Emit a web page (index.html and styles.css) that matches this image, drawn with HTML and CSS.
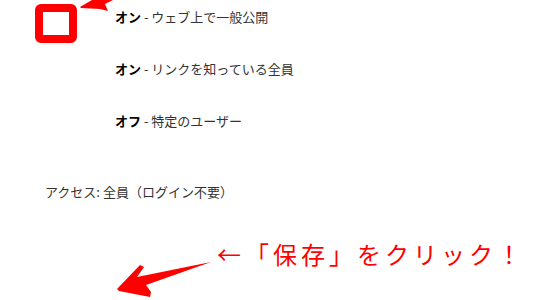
FILE: index.html
```html
<!DOCTYPE html>
<html lang="ja">
  <head>
    <meta charset="UTF-8" />
    <meta name="viewport" content="width=device-width, initial-scale=1.0" />
    <title>共有設定</title>
    <link rel="stylesheet" href="styles.css">
  </head>
  <body>
    <div id="page">
      <ul class="options">
        <li><b>オン</b> - ウェブ上で一般公開</li>
        <li><b>オン</b> - リンクを知っている全員</li>
        <li><b>オフ</b> - 特定のユーザー</li>
      </ul>
      <p class="access">アクセス: 全員（ログイン不要）</p>
      <p class="hint">←「保存」をクリック！</p>

      <span class="mark"></span>
      <svg class="arrows" width="546" height="300" viewBox="0 0 546 300">
        <polygon points="80,7 92,0 113,0 105,4 108,11 100,9 81,8" fill="#ff0000" />
        <polygon points="117,289 140,265 144,267 137,277 211,262 146,285 151,292 150,297 119,291" fill="#ff0000" />
      </svg>
    </div>
  </body>
</html>
```

FILE: styles.css
```css
* {
  padding: 0;
  margin: 0;
  box-sizing: border-box;
  font-family: "Noto Sans CJK JP", "Noto Sans", sans-serif;
}
body {
  background-color: white;
}
#page {
  position: relative;
  width: 546px;
  height: 300px;
  overflow: hidden;
}
.options {
  list-style: none;
  display: flex;
  flex-direction: column;
  gap: 36px;
  padding: 9px 0 0 115px;
  font-size: 13px;
  line-height: 16px;
  color: #333;
}
.options b {
  color: #000;
}
.access {
  margin-top: 55px;
  padding-left: 45px;
  font-size: 13px;
  line-height: 16px;
  color: #333;
}
.hint {
  margin-top: 39px;
  padding-left: 217px;
  font-size: 24px;
  line-height: 30px;
  letter-spacing: 4px;
  color: #ff0000;
}
.mark {
  position: absolute;
  left: 35px;
  top: 4px;
  width: 42px;
  height: 39px;
  border: 8px solid #ff0000;
  border-radius: 6px;
}
.arrows {
  position: absolute;
  left: 0;
  top: 0;
}
```
